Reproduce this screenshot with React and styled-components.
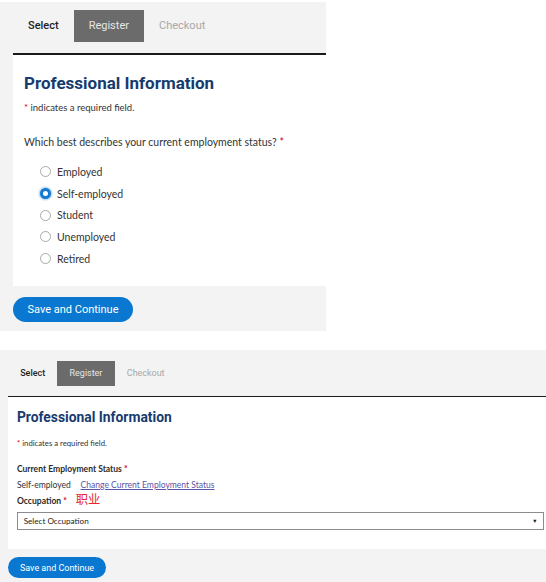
import styled, { createGlobalStyle } from "styled-components";

const GlobalStyle = createGlobalStyle`
  html, body {
    margin: 0;
    padding: 0;
    background: #fff;
  }
  body {
    width: 546px;
    height: 582px;
    overflow: hidden;
  }
  #root {
    padding-top: 2px;
  }
`;

const options = ["Employed", "Self-employed", "Student", "Unemployed", "Retired"];
const tabs = ["Select", "Register", "Checkout"];

const Steps = ({ $nav }) => (
  <Nav {...$nav}>
    {tabs.map((t, i) => (
      <Tab key={t} $state={i === 0 ? "done" : i === 1 ? "active" : "todo"} $h={$nav.$tabH}>
        {t}
      </Tab>
    ))}
  </Nav>
);

const App = () => {
  return (
    <>
      <GlobalStyle />
      <Shot $width={326}>
        <Steps $nav={{ $left: 13, $top: 8, $bottom: 11, $tabH: 32 }} />
        <Card $left={13} $pad="18px 11px 17px">
          <Heading>Professional Information</Heading>
          <Note $mt={8}>
            <Star>*</Star> indicates a required field.
          </Note>
          <Question>
            Which best describes your current employment status? <Star>*</Star>
          </Question>
          <RadioList>
            {options.map((o) => (
              <RadioRow key={o}>
                <RadioDot $checked={o === "Self-employed"} />
                <Label>{o}</Label>
              </RadioRow>
            ))}
          </RadioList>
        </Card>
        <Footer $pad="11px 13px 9px">
          <SaveButton>Save and Continue</SaveButton>
        </Footer>
      </Shot>

      <Shot $width={678} $zoom={0.815} $mt={23.3}>
        <Steps $nav={{ $left: 9.8, $top: 13.5, $bottom: 12, $tabH: 30.7 }} />
        <Card $left={9.8} $pad="15px 11px 23px">
          <Heading>Professional Information</Heading>
          <Note $mt={15}>
            <Star>*</Star> indicates a required field.
          </Note>
          <FieldLabel $mt={15}>
            Current Employment Status <Star>*</Star>
          </FieldLabel>
          <ValueRow>
            <span>Self-employed</span>
            <ChangeLink href="#">Change Current Employment Status</ChangeLink>
          </ValueRow>
          <FieldLabel>
            Occupation <Star>*</Star>
            <Hint>职业</Hint>
          </FieldLabel>
          <SelectBox>
            <span>Select Occupation</span>
            <Caret>▼</Caret>
          </SelectBox>
        </Card>
        <Footer $pad="10px 10px 20px">
          <SaveButton>Save and Continue</SaveButton>
        </Footer>
      </Shot>
    </>
  );
};

export default App;

// styled-components
const Shot = styled.section`
  zoom: ${(p) => p.$zoom || 1};
  width: ${(p) => p.$width}px;
  margin-top: ${(p) => p.$mt || 0}px;
  background: #f3f3f3;
`;
const Nav = styled.nav`
  display: flex;
  margin-left: ${(p) => p.$left}px;
  padding: ${(p) => p.$top}px 0 ${(p) => p.$bottom}px;
  border-bottom: 2px solid #1b1b1b;
`;
const Tab = styled.div`
  height: ${(p) => p.$h}px;
  line-height: ${(p) => p.$h}px;
  padding: 0 15px;
  font-family: Roboto, "Liberation Sans", sans-serif;
  font-size: 11px;
  font-weight: ${(p) => (p.$state === "done" ? 500 : 400)};
  color: ${(p) =>
    p.$state === "done" ? "#1e1e1e" : p.$state === "active" ? "#e6e6e6" : "#a8a8a8"};
  background: ${(p) => (p.$state === "active" ? "#6b6b6b" : "transparent")};
`;
const Card = styled.div`
  margin-left: ${(p) => p.$left}px;
  padding: ${(p) => p.$pad};
  background: #fff;
  font-family: Lato, "Open Sans", sans-serif;
  color: #333;
`;
const Heading = styled.h2`
  margin: 0;
  font-family: Roboto, "Liberation Sans", sans-serif;
  font-size: 17px;
  line-height: 20px;
  font-weight: 700;
  color: #163b6e;
`;
const Note = styled.p`
  margin: ${(p) => p.$mt}px 0 0;
  font-size: 9.5px;
  line-height: 14px;
`;
const Star = styled.span`
  color: #d0021b;
`;
const Question = styled.p`
  margin: 20px 0 0;
  font-size: 10.5px;
  line-height: 14px;
`;
const RadioList = styled.ul`
  list-style: none;
  margin: 12px 0 0;
  padding: 0 0 0 16px;
`;
const RadioRow = styled.li`
  display: flex;
  align-items: center;
  gap: 6px;
  height: 21.7px;
`;
const RadioDot = styled.span`
  box-sizing: border-box;
  width: 11px;
  height: 11px;
  border-radius: 50%;
  border: ${(p) => (p.$checked ? "3.5px solid #1479d2" : "1px solid #a9a9a9")};
  background: #fff;
  box-shadow: ${(p) => (p.$checked ? "0 0 2px 1px rgba(20, 121, 210, 0.45)" : "none")};
`;
const Label = styled.span`
  font-size: 10.5px;
`;
const FieldLabel = styled.div`
  height: 19.6px;
  margin-top: ${(p) => p.$mt || 0}px;
  font-size: 10.5px;
  line-height: 19.6px;
  font-weight: 700;
  color: #2b2b2b;
`;
const ValueRow = styled.div`
  display: flex;
  gap: 12px;
  height: 19.6px;
  font-size: 10.5px;
  line-height: 19.6px;
`;
const ChangeLink = styled.a`
  color: #5b55a8;
  text-decoration: underline;
`;
const Hint = styled.span`
  margin-left: 11px;
  font-family: "Noto Sans CJK SC", sans-serif;
  font-size: 15px;
  line-height: 0;
  font-weight: 400;
  color: #e8262b;
  position: relative;
  top: 1px;
`;
const SelectBox = styled.div`
  display: flex;
  justify-content: space-between;
  align-items: center;
  box-sizing: border-box;
  height: 23.3px;
  margin-top: 2.5px;
  padding: 0 6px 0 7px;
  border: 1px solid #8c8c8c;
  font-size: 10px;
  color: #222;
`;
const Caret = styled.span`
  font-size: 7px;
  color: #222;
`;
const Footer = styled.div`
  padding: ${(p) => p.$pad};
`;
const SaveButton = styled.button`
  width: 120px;
  height: 25px;
  border: 0;
  border-radius: 13px;
  background: #0a78d1;
  color: #fff;
  font-family: Roboto, "Liberation Sans", sans-serif;
  font-size: 11px;
  cursor: pointer;
`;
